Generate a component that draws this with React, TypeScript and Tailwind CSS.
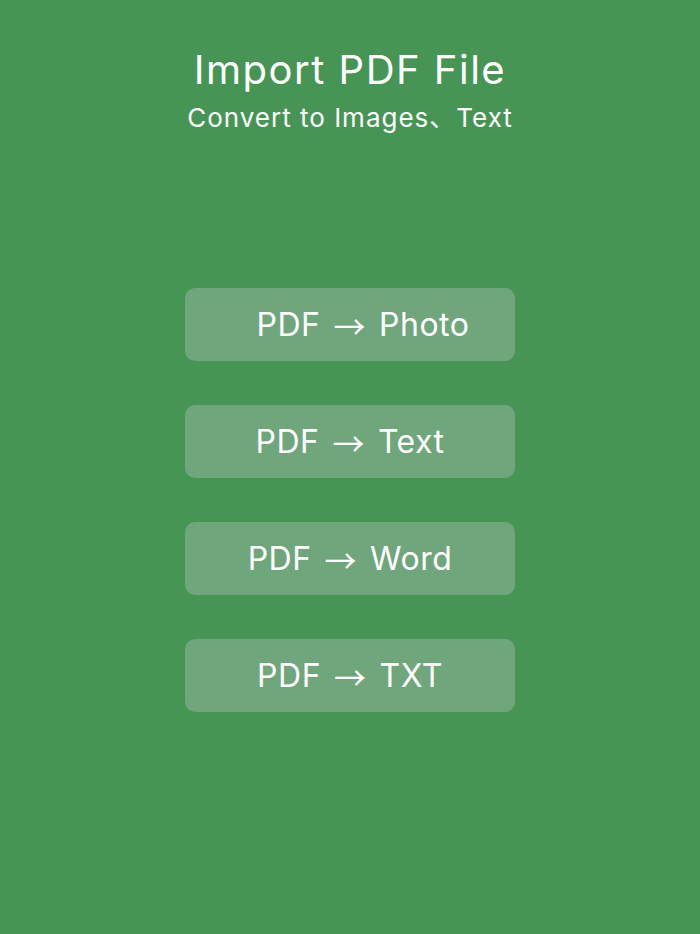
const items = [
  { from: "PDF", to: "Photo", shift: "pl-[26px]" },
  { from: "PDF", to: "Text", shift: "" },
  { from: "PDF", to: "Word", shift: "" },
  { from: "PDF", to: "TXT", shift: "" },
];

export default function App() {
  return (
    <div
      className="min-h-[934px] w-full bg-[#479555] text-white flex flex-col items-center"
      style={{ fontFamily: "Inter, 'Noto Sans CJK SC', sans-serif" }}
    >
      {/* Header */}
      <h1 className="mt-[44px] text-[40px] leading-[52px] font-normal tracking-[1.5px]">Import PDF File</h1>
      <p className="mt-[5px] text-[26px] leading-[34px] tracking-[1px]">Convert to Images、Text</p>

      {/* Conversion buttons */}
      <div className="mt-[153px] flex flex-col gap-[44px]">
        {items.map((item) => (
          <button
            key={item.to}
            className={`w-[330px] h-[73px] rounded-[10px] bg-[#70a67b] text-[32px] text-white flex items-center justify-center tracking-[0.5px] ${item.shift}`}
          >
            {item.from}
            <span className="mx-[13px] font-['Noto_Sans_CJK_SC',sans-serif]">→</span>
            {item.to}
          </button>
        ))}
      </div>
    </div>
  );
}
